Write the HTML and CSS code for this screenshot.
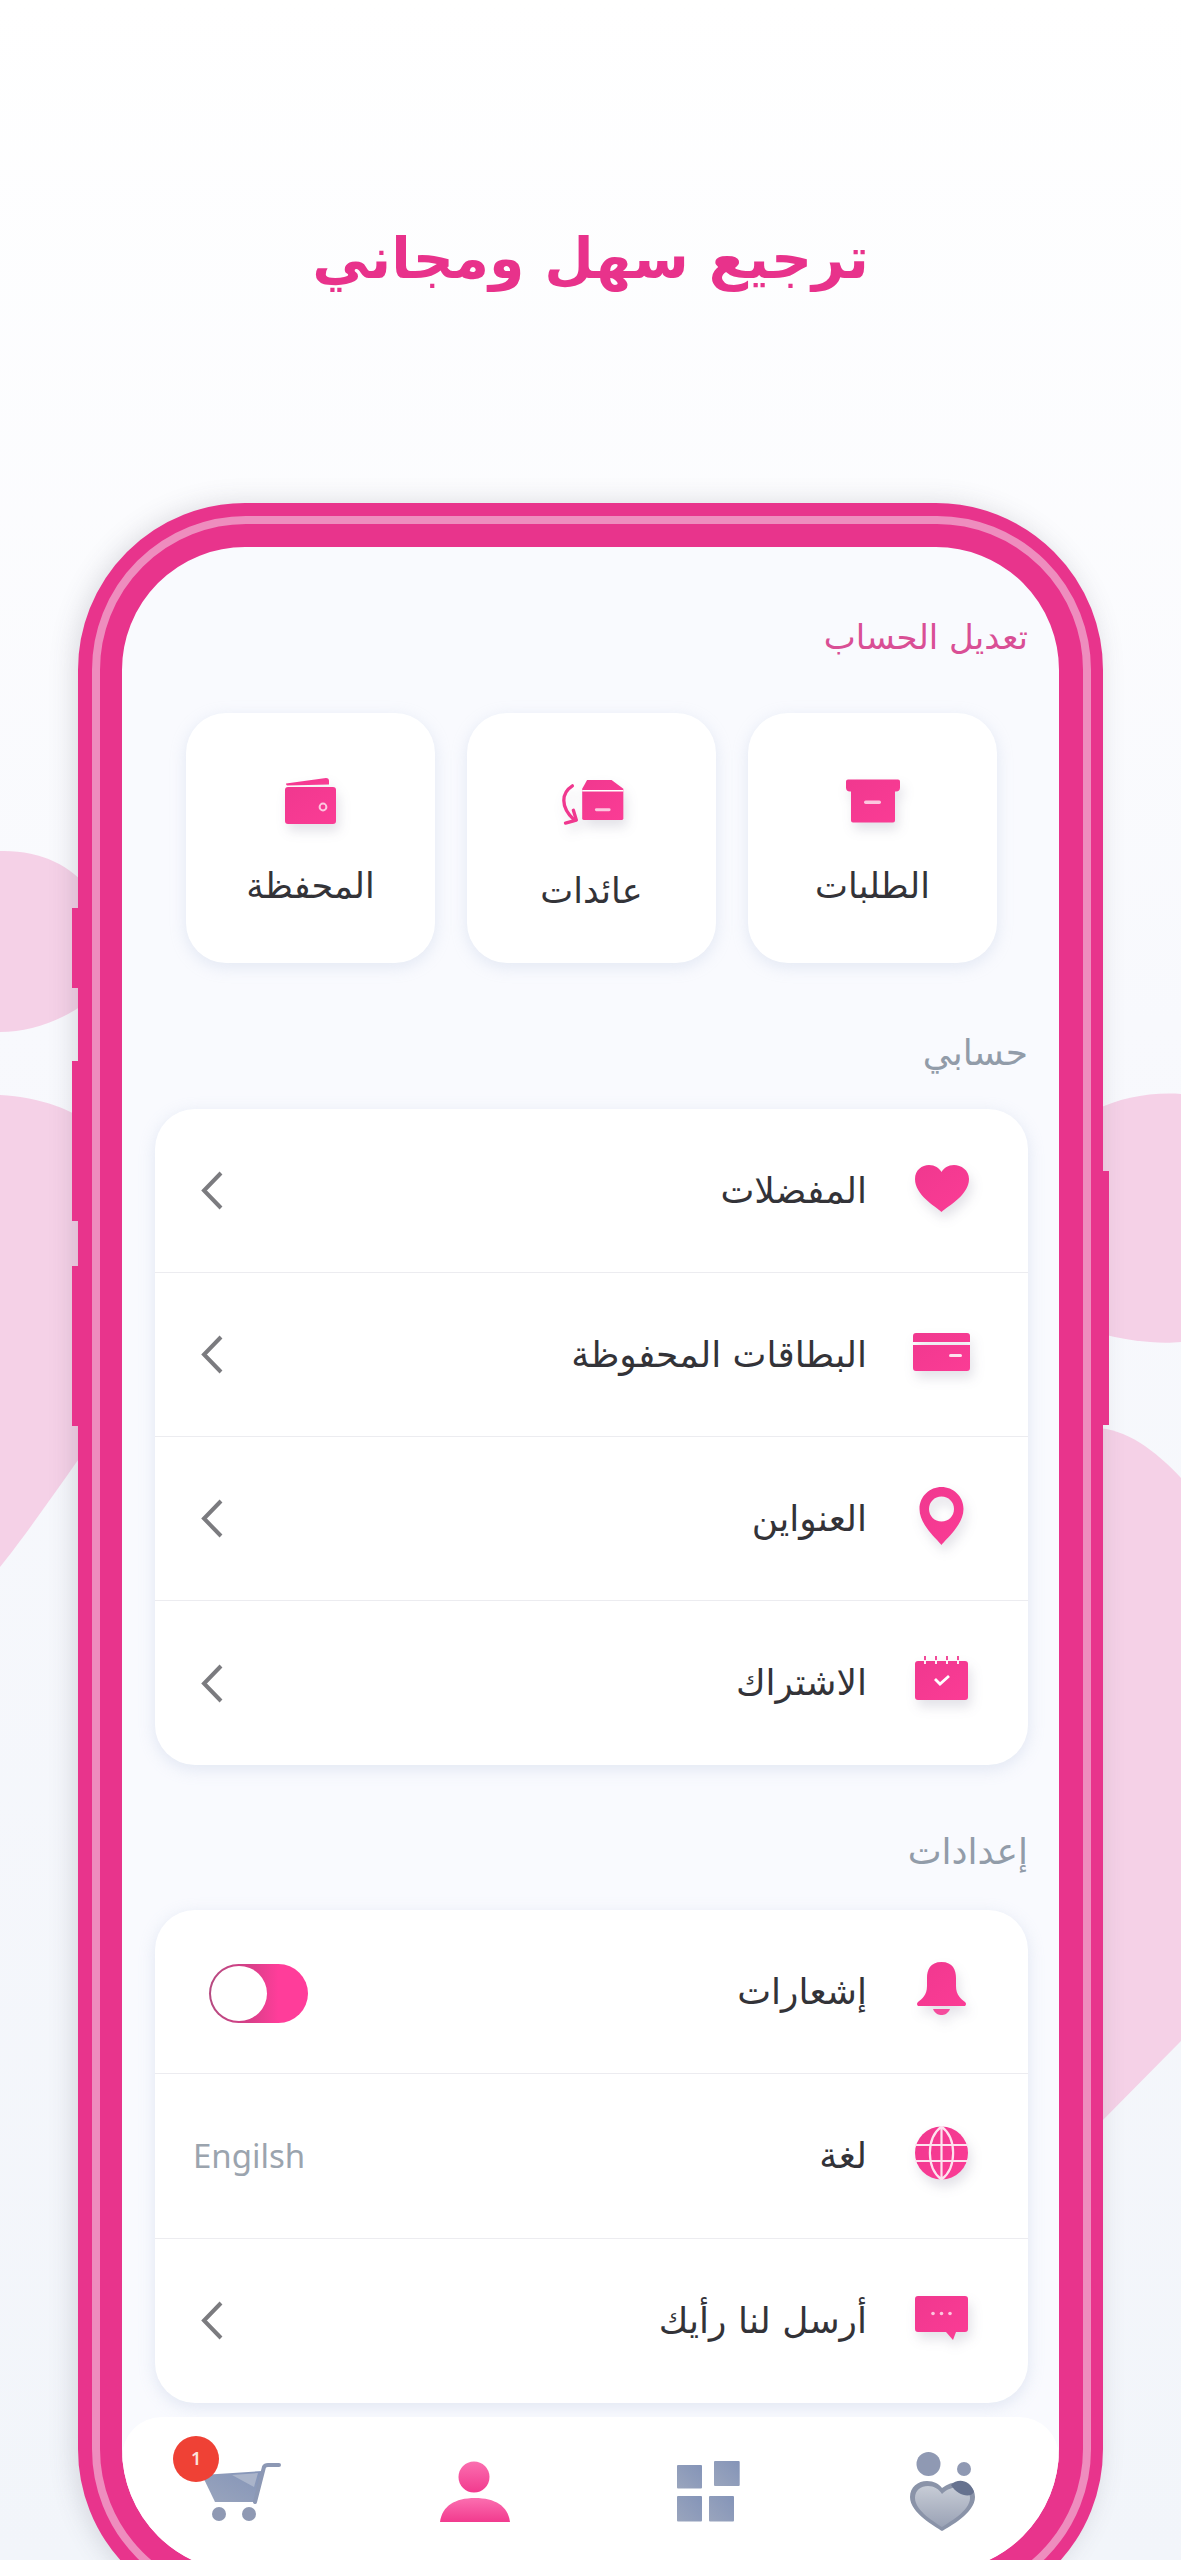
FILE: index.html
```html
<!DOCTYPE html>
<html lang="ar" dir="rtl">
<head>
<meta charset="utf-8">
<title>ترجيع سهل ومجاني</title>
<link rel="stylesheet" href="styles.css">
</head>
<body>
<svg class="defs" aria-hidden="true">
  <defs>
    <linearGradient id="pk" x1="0" y1="0" x2="1" y2="1"><stop offset="0" stop-color="#f0388f"/><stop offset="1" stop-color="#fb3c95"/></linearGradient>
    <linearGradient id="gr" x1="1" y1="0" x2="0" y2="1"><stop offset="0" stop-color="#8494b8"/><stop offset="1" stop-color="#9aa5bd"/></linearGradient>
    <linearGradient id="ht" x1="0" y1="0" x2="0" y2="1"><stop offset="0" stop-color="#c7ccd6"/><stop offset="1" stop-color="#9aa2b5"/></linearGradient>
    <linearGradient id="pr" x1="0" y1="0" x2="0" y2="1"><stop offset="0" stop-color="#fb6fb0"/><stop offset="1" stop-color="#f23a8e"/></linearGradient>
  </defs>
</svg>
<svg class="blobs" viewBox="0 0 1181 2560" aria-hidden="true">
  <path d="M0 851C40 850 70 865 90 890V1000C60 1022 30 1032 0 1032Z"/>
  <path d="M0 1095C40 1097 75 1110 100 1130V1430C70 1470 30 1530 0 1567Z"/>
  <path d="M1095 1110C1120 1098 1150 1092 1181 1094V1342C1160 1344 1130 1342 1095 1332Z"/>
  <path d="M1095 1428C1125 1428 1155 1450 1181 1478V2041L1095 2128Z"/>
</svg>

<h1 class="headline">ترجيع سهل ومجاني</h1>

<div class="device">
  <span class="side side-a"></span>
  <span class="side side-b"></span>
  <span class="side side-c"></span>
  <span class="side side-d"></span>
  <main class="screen">
    <div class="content">
      <h2 class="edit-link">تعديل الحساب</h2>
      <section class="cards">
        <article class="card">
          <svg class="card-icon box" width="54" height="43" viewBox="0 0 54 43"><path fill="url(#pk)" d="M2 0H52Q54 0 54 2V8Q54 12 50 12H49V41Q49 43 47 43H7Q5 43 5 41V12H4Q0 12 0 8V2Q0 0 2 0Z"/><rect x="18" y="21" width="17" height="3.5" rx="1.7" fill="#fcc7df"/></svg>
          <span class="card-label">الطلبات</span>
        </article>
        <article class="card card-low">
          <svg class="card-icon" width="65" height="49" viewBox="0 0 65 49"><path fill="url(#pk)" d="M28 3H53L65 12V42Q65 44 63 44H25Q23 44 23 42V12Z"/><path d="M23 14H65" stroke="#fff" stroke-width="1.5"/><rect x="36" y="32" width="16" height="3" rx="1.5" fill="#fcc7df"/><path d="M13 9C2 16 0 30 15 44" fill="none" stroke="#f0388f" stroke-width="3.4" stroke-linecap="round"/><path d="M14 34L17 44L6 47" fill="none" stroke="#f0388f" stroke-width="3.4" stroke-linecap="round" stroke-linejoin="round"/></svg>
          <span class="card-label">عائدات</span>
        </article>
        <article class="card">
          <svg class="card-icon wallet" width="51" height="46" viewBox="0 0 51 46"><path fill="url(#pk)" d="M1 5.500L41 0Q44 0 44 3V6.500L2 7.500Q1 7 1 5.500Z"/><rect y="9" width="51" height="37" rx="3" fill="url(#pk)"/><circle cx="38" cy="29" r="3.4" fill="none" stroke="#fcc7df" stroke-width="2"/></svg>
          <span class="card-label">المحفظة</span>
        </article>
      </section>

      <h2 class="section-title">حسابي</h2>
      <section class="list list-four">
        <div class="row">
          <svg class="row-icon heart" width="57" height="47" viewBox="0 0 57 47"><path fill="url(#pk)" d="M28.500 47C22 41 2 30 2 14C2 5 9 0 16 0C22 0 26 3 28.500 7C31 3 35 0 41 0C48 0 56 5 56 14C56 30 35 41 28.500 47Z"/></svg>
          <span class="row-text">المفضلات</span>
          <svg class="chev" width="25" height="41" viewBox="0 0 25 41"><path d="M21 3L4 20.500L21 38" fill="none" stroke="#7b7b7f" stroke-width="4"/></svg>
        </div>
        <div class="row">
          <svg class="row-icon" width="57" height="38" viewBox="0 0 57 38"><path fill="url(#pk)" d="M3 0H54Q57 0 57 3V9H0V3Q0 0 3 0ZM0 12H57V35Q57 38 54 38H3Q0 38 0 35Z"/><rect x="36" y="21" width="13" height="3" rx="1.500" fill="#fde3ef"/></svg>
          <span class="row-text">البطاقات المحفوظة</span>
          <svg class="chev" width="25" height="41" viewBox="0 0 25 41"><path d="M21 3L4 20.500L21 38" fill="none" stroke="#7b7b7f" stroke-width="4"/></svg>
        </div>
        <div class="row">
          <svg class="row-icon" width="57" height="58" viewBox="0 0 57 58"><path fill="url(#pk)" fill-rule="evenodd" d="M28.500 58C24 52 6.500 38 6.500 22C6.500 9 17 0 28.500 0C40 0 50.500 9 50.500 22C50.500 38 33 52 28.500 58ZM28.500 9.500C21.500 9.500 16 15 16 22C16 29 21.500 34.500 28.500 34.500C35.500 34.500 41 29 41 22C41 15 35.500 9.500 28.500 9.500Z"/></svg>
          <span class="row-text">العنواين</span>
          <svg class="chev" width="25" height="41" viewBox="0 0 25 41"><path d="M21 3L4 20.500L21 38" fill="none" stroke="#7b7b7f" stroke-width="4"/></svg>
        </div>
        <div class="row">
          <svg class="row-icon calendar" width="57" height="44" viewBox="0 0 57 44"><path fill="url(#pk)" d="M5 5H52Q55 5 55 8V41Q55 44 52 44H5Q2 44 2 41V8Q2 5 5 5Z"/><path d="M12 0V7M23 0V7M34 0V7M45 0V7" stroke="#f0388f" stroke-width="1.800"/><path d="M12 4V8M23 4V8M34 4V8M45 4V8" stroke="#fff" stroke-width="1.800"/><path d="M22 23L27 28L36 20" fill="none" stroke="#fff" stroke-width="2.800"/></svg>
          <span class="row-text">الاشتراك</span>
          <svg class="chev" width="25" height="41" viewBox="0 0 25 41"><path d="M21 3L4 20.500L21 38" fill="none" stroke="#7b7b7f" stroke-width="4"/></svg>
        </div>
      </section>

      <h2 class="section-title settings">إعدادات</h2>
      <section class="list list-three">
        <div class="row">
          <svg class="row-icon" width="57" height="53" viewBox="0 0 57 53"><path fill="url(#pk)" d="M28.500 0C40 0 43 8 43 16V24C43 33 48 37 52 40Q54 42 52 44H5Q3 42 5 40C9 37 14 33 14 24V16C14 8 17 0 28.500 0Z"/><path fill="#f54c9d" d="M20 47H37C35 52 31 53 28.500 53C26 53 22 52 20 47Z"/></svg>
          <span class="row-text">إشعارات</span>
          <span class="toggle"><span class="knob"></span></span>
        </div>
        <div class="row">
          <svg class="row-icon" width="57" height="54" viewBox="0 0 57 54"><circle cx="28.500" cy="27" r="26.500" fill="url(#pk)"/><path d="M2 19H55M2 35H55M28.500 0V54M28.500 .5C13 12 13 42 28.500 53.500C44 42 44 12 28.500 .5Z" fill="none" stroke="#fde3ef" stroke-width="2.200"/></svg>
          <span class="row-text">لغة</span>
          <span class="lang">Engilsh</span>
        </div>
        <div class="row">
          <svg class="row-icon" width="57" height="44" viewBox="0 0 57 44"><path fill="url(#pk)" d="M5 0H52Q55 0 55 3V33Q55 36 52 36H43L40 44L33 36H5Q2 36 2 33V3Q2 0 5 0Z"/><circle cx="20" cy="17.500" r="1.800" fill="#fcc7df"/><circle cx="28.500" cy="17.500" r="1.800" fill="#fcc7df"/><circle cx="37" cy="17.500" r="1.800" fill="#fcc7df"/></svg>
          <span class="row-text">أرسل لنا رأيك</span>
          <svg class="chev" width="25" height="41" viewBox="0 0 25 41"><path d="M21 3L4 20.500L21 38" fill="none" stroke="#7b7b7f" stroke-width="4"/></svg>
        </div>
      </section>
    </div>

    <nav class="tabbar">
      <div class="tab">
        <svg width="65" height="80" viewBox="0 0 65 80"><circle cx="18.500" cy="13" r="12" fill="#8f99b3"/><circle cx="54" cy="18" r="7" fill="#8f99b3"/><path fill="#8a93a8" d="M32 80C26 76 0 62 0 46C0 36 8 30 17 30C24 30 29 33 32 37C37 33 43 31 49 31C58 31 65 37 65 46C65 62 39 76 32 80Z"/><path fill="url(#ht)" d="M32 76C26 72 5 60 5 47C5 39 11 35 18 35C24 35 29 38 32 43C37 38 43 36 49 36C56 36 60 41 60 47C60 60 38 72 32 76Z"/><path fill="#66728f" d="M41 34C47 27 60 28 64 41C60 48 47 44 41 34Z"/></svg>
      </div>
      <div class="tab">
        <svg width="63" height="61" viewBox="0 0 63 61"><rect y="4" width="25" height="23.500" rx="1" fill="url(#gr)"/><rect x="37" width="25.700" height="25" rx="1" fill="url(#gr)"/><rect y="35" width="25" height="25.600" rx="1" fill="url(#gr)"/><rect x="32" y="35" width="25" height="25.600" rx="1" fill="url(#gr)"/></svg>
      </div>
      <div class="tab">
        <svg width="70" height="61" viewBox="0 0 70 61"><ellipse cx="34" cy="16" rx="15.500" ry="15.500" fill="url(#pr)"/><path fill="url(#pr)" d="M0 61C2 45 15 37 35 37C55 37 68 45 70 61Z"/></svg>
      </div>
      <div class="tab">
        <span class="cart-wrap">
          <svg width="79" height="61" viewBox="0 0 79 61"><path fill="url(#gr)" d="M0 14L60 10L53 41H13Z"/><path fill="#aab4ca" d="M30 14L56 12L52 26Z"/><path d="M53 41L62 6Q63 4 66 4H77" fill="none" stroke="#8c98b4" stroke-width="4" stroke-linecap="round"/><circle cx="17" cy="53" r="7" fill="#8f99b3"/><circle cx="47" cy="53" r="7" fill="#8f99b3"/></svg>
          <span class="badge">1</span>
        </span>
      </div>
    </nav>
  </main>
</div>
</body>
</html>
```
FILE: styles.css
```css
* { box-sizing: border-box; }

html, body { margin: 0; padding: 0; }

body {
  position: relative;
  width: 1181px;
  height: 2560px;
  overflow: hidden;
  background: linear-gradient(180deg, #ffffff 0%, #f8f9fd 40%, #f2f5fa 100%);
  font-family: "DejaVu Sans", "Noto Sans", sans-serif;
  color: #333338;
}

.defs { position: absolute; width: 0; height: 0; }

.blobs {
  position: absolute;
  left: 0;
  top: 0;
  width: 1181px;
  height: 2560px;
  fill: #f5d1e7;
}

.headline {
  position: relative;
  margin: 0;
  height: 503px;
  padding-top: 218px;
  text-align: center;
  font-size: 57px;
  line-height: 80px;
  font-weight: 700;
  color: #e8328b;
}

.device {
  position: relative;
  width: 1025px;
  height: 2113px;
  margin: 0 auto;
}

.device::after {
  content: "";
  position: absolute;
  inset: 13px 12px 13px 14px;
  border: 8px solid #ee8dbe;
  border-radius: 154px;
  pointer-events: none;
}

.side {
  position: absolute;
  width: 6px;
  background: #e8348c;
}
.side-a { right: 100%; top: 405px; height: 80px; }
.side-b { right: 100%; top: 558px; height: 160px; }
.side-c { right: 100%; top: 763px; height: 160px; }
.side-d { left: 100%; top: 668px; height: 254px; }

.screen {
  display: flex;
  flex-direction: column;
  height: 100%;
  overflow: hidden;
  border: 44px solid #e8348c;
  border-radius: 167px;
  background: #f9fafe;
  box-shadow: -4px 0 26px rgba(70, 70, 90, .18);
}

.content {
  flex: 1;
  padding: 65px 31px 0 33px;
}

.edit-link, .section-title {
  margin: 0;
  height: 50px;
  line-height: 50px;
  font-size: 34px;
  font-weight: 400;
}

.edit-link { color: #d94f95; }

.section-title {
  margin-top: 65px;
  color: #929ca9;
  font-size: 36px;
}
.section-title.settings { margin-top: 62px; }

.cards {
  display: flex;
  justify-content: center;
  gap: 32px;
  margin-top: 51px;
}

.card {
  display: flex;
  flex-direction: column;
  align-items: center;
  width: 249px;
  height: 250px;
  padding-top: 64px;
  border-radius: 40px;
  background: #fff;
  box-shadow: 0 4px 16px rgba(170, 185, 215, .28);
}

.card-icon {
  height: 48px;
  filter: drop-shadow(3px 7px 6px rgba(60, 50, 90, .14));
}

.card-label {
  margin-top: 38px;
  font-size: 35px;
  line-height: 46px;
}
.card-low .card-label { margin-top: 43px; }

.list {
  display: grid;
  margin-top: 31px;
  border-radius: 40px;
  background: #fff;
  box-shadow: 0 4px 16px rgba(170, 185, 215, .3);
}
.list-four { height: 656px; grid-auto-rows: 1fr; }
.list-three { height: 493px; margin-top: 33px; grid-auto-rows: 1fr; }

.row {
  display: flex;
  align-items: center;
  padding-right: 58px;
  border-bottom: 1.500px solid #ececf0;
}
.row:last-child { border-bottom: 0; }

.row-icon {
  flex: none;
  margin-top: -6px;
  filter: drop-shadow(3px 7px 6px rgba(60, 50, 90, .14));
}
.row-icon.heart { margin-top: -4px; }
.row-icon.calendar { margin-top: -10px; }

.row-text {
  margin-right: 46px;
  font-size: 36px;
  line-height: 44px;
}

.chev { flex: none; margin-right: auto; margin-left: 45px; }

.toggle {
  display: flex;
  justify-content: flex-end;
  flex: none;
  width: 99px;
  height: 59px;
  margin-right: auto;
  margin-left: 54px;
  margin-top: 3px;
  padding: 2px;
  border-radius: 30px;
  background: linear-gradient(90deg, #b54a80 0%, #d73f88 40%, #ff3d9a 70%);
}

.knob {
  width: 56px;
  height: 55px;
  border-radius: 50%;
  background: #fff;
}

.lang {
  margin-right: auto;
  margin-left: 38px;
  font-family: "Noto Sans", sans-serif;
  font-size: 33px;
  font-weight: 400;
  line-height: 44px;
  color: #9ba4ae;
}

.tabbar {
  display: grid;
  grid-template-columns: repeat(4, 1fr);
  height: 155px;
  margin-top: 14px;
  padding: 34px 0 0 3px;
  border-radius: 40px 40px 0 0;
  background: #fff;
}

.tab {
  display: flex;
  justify-content: center;
  align-items: center;
  height: 80px;
}

.cart-wrap {
  position: relative;
  display: flex;
}

.badge {
  position: absolute;
  top: -25px;
  left: -29px;
  width: 46px;
  height: 46px;
  border-radius: 50%;
  background: #ef4135;
  color: #fbe3dc;
  font-family: "Noto Sans", sans-serif;
  font-size: 18px;
  font-weight: 600;
  line-height: 44px;
  text-align: center;
}
```
